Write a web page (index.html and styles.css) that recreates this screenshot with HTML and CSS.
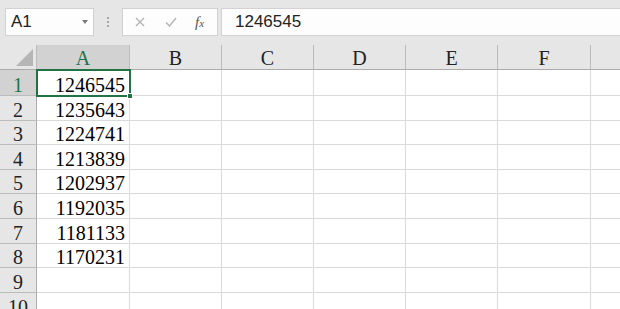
FILE: index.html
```html
<!DOCTYPE html>
<html lang="zh-CN">
  <head>
    <meta charset="UTF-8" />
    <meta name="viewport" content="width=device-width, initial-scale=1.0" />
    <title>Sheet1</title>
    <link rel="stylesheet" href="styles.css">
  </head>
  <body>
    <div class="formula-bar">
      <div class="name-box">
        <span>A1</span>
        <span class="caret"></span>
      </div>
      <div class="grip"><i></i><i></i><i></i></div>
      <div class="func-box">
        <svg width="10" height="10" viewBox="0 0 10 10"><path d="M1 1L9 9M9 1L1 9" stroke="#b4b4b4" stroke-width="1.4" fill="none"/></svg>
        <svg width="12" height="10" viewBox="0 0 12 10"><path d="M1 5.5L4.5 9L11 1" stroke="#b4b4b4" stroke-width="1.4" fill="none"/></svg>
        <span class="fx">f<small>x</small></span>
      </div>
      <div class="formula-input">1246545</div>
    </div>

    <div class="sheet">
      <div class="corner"><span class="tri"></span></div>
      <div class="col-head active">A</div>
      <div class="col-head">B</div>
      <div class="col-head">C</div>
      <div class="col-head">D</div>
      <div class="col-head">E</div>
      <div class="col-head">F</div>
      <div class="col-head"></div>

      <div class="row-head active">1</div>
      <div class="cell num selected">1246545<span class="handle"></span></div>
      <div class="cell"></div><div class="cell"></div><div class="cell"></div><div class="cell"></div><div class="cell"></div><div class="cell"></div>

      <div class="row-head">2</div>
      <div class="cell num">1235643</div>
      <div class="cell"></div><div class="cell"></div><div class="cell"></div><div class="cell"></div><div class="cell"></div><div class="cell"></div>

      <div class="row-head">3</div>
      <div class="cell num">1224741</div>
      <div class="cell"></div><div class="cell"></div><div class="cell"></div><div class="cell"></div><div class="cell"></div><div class="cell"></div>

      <div class="row-head">4</div>
      <div class="cell num">1213839</div>
      <div class="cell"></div><div class="cell"></div><div class="cell"></div><div class="cell"></div><div class="cell"></div><div class="cell"></div>

      <div class="row-head">5</div>
      <div class="cell num">1202937</div>
      <div class="cell"></div><div class="cell"></div><div class="cell"></div><div class="cell"></div><div class="cell"></div><div class="cell"></div>

      <div class="row-head">6</div>
      <div class="cell num">1192035</div>
      <div class="cell"></div><div class="cell"></div><div class="cell"></div><div class="cell"></div><div class="cell"></div><div class="cell"></div>

      <div class="row-head">7</div>
      <div class="cell num">1181133</div>
      <div class="cell"></div><div class="cell"></div><div class="cell"></div><div class="cell"></div><div class="cell"></div><div class="cell"></div>

      <div class="row-head">8</div>
      <div class="cell num">1170231</div>
      <div class="cell"></div><div class="cell"></div><div class="cell"></div><div class="cell"></div><div class="cell"></div><div class="cell"></div>

      <div class="row-head">9</div>
      <div class="cell"></div><div class="cell"></div><div class="cell"></div><div class="cell"></div><div class="cell"></div><div class="cell"></div><div class="cell"></div>

      <div class="row-head">10</div>
      <div class="cell"></div><div class="cell"></div><div class="cell"></div><div class="cell"></div><div class="cell"></div><div class="cell"></div><div class="cell"></div>
    </div>
  </body>
</html>
```

FILE: styles.css
```css
:root {
  --toolbar: #e6e6e6;
  --header: #e6e6e6;
  --header-active: #d2d2d2;
  --header-line: #bcbcbc;
  --grid-line: #dadada;
  --green: #217346;
  --box: #fdfdfd;
  --box-border: #d2d2d2;
}

* {
  margin: 0;
  padding: 0;
  box-sizing: border-box;
}

body {
  width: 620px;
  height: 309px;
  overflow: hidden;
  background-color: #fff;
  font-family: "Liberation Serif", "Times New Roman", serif;
}

/* barra de fórmulas */
.formula-bar {
  height: 45px;
  background-color: var(--toolbar);
  display: flex;
  align-items: flex-start;
  padding: 8px 0 0 5px;
  font-family: "Liberation Sans", Arial, sans-serif;
}

.name-box {
  width: 89px;
  height: 28px;
  background-color: var(--box);
  border: 1px solid var(--box-border);
  display: flex;
  align-items: center;
  justify-content: space-between;
  padding: 0 5px 0 5px;
  font-size: 17px;
  color: #222;
}

.caret {
  width: 0;
  height: 0;
  border-left: 3.5px solid transparent;
  border-right: 3.5px solid transparent;
  border-top: 4px solid #7a7a7a;
}

.grip {
  width: 28px;
  height: 28px;
  display: flex;
  flex-direction: column;
  align-items: center;
  justify-content: center;
  gap: 2px;
}

.grip i {
  display: block;
  width: 2px;
  height: 2px;
  background-color: #a8a8a8;
}

.func-box {
  width: 96px;
  height: 28px;
  background-color: var(--box);
  border: 1px solid var(--box-border);
  display: flex;
  align-items: center;
  padding: 0 0 0 12px;
  gap: 20px;
}

.fx {
  font-family: "Liberation Serif", serif;
  font-style: italic;
  font-size: 15px;
  color: #555;
  margin-left: -2px;
}

.fx small {
  font-size: 11px;
}

.formula-input {
  flex: 1;
  height: 28px;
  margin-left: 3px;
  background-color: var(--box);
  border: 1px solid var(--box-border);
  border-right: none;
  display: flex;
  align-items: center;
  padding-left: 13px;
  font-size: 17px;
  color: #222;
}

/* planilha */
.sheet {
  display: grid;
  grid-template-columns: 37px 93px 92px 92px 92px 92px 93px 60px;
  grid-template-rows: 25px 26px 25px 24px 25px 24px 25px 25px 24px 25px 25px;
  font-size: 20px;
  line-height: 20px;
  color: #111;
}

.corner {
  background-color: var(--header);
  border-right: 1px solid var(--header-line);
  border-bottom: 1px solid #ababab;
  display: flex;
  justify-content: flex-end;
  align-items: flex-end;
  padding: 0 3px 3px 0;
}

.tri {
  width: 0;
  height: 0;
  border-left: 17px solid transparent;
  border-bottom: 17px solid #b5b5b5;
}

.col-head {
  background-color: var(--header);
  border-right: 1px solid var(--header-line);
  border-bottom: 1px solid #ababab;
  display: flex;
  justify-content: center;
  align-items: flex-end;
  padding-bottom: 1px;
  color: #222;
}

.row-head {
  background-color: var(--header);
  border-right: 1px solid #ababab;
  border-bottom: 1px solid var(--header-line);
  display: flex;
  justify-content: center;
  align-items: flex-end;
  color: #222;
}

.col-head.active,
.row-head.active {
  background-color: var(--header-active);
  color: var(--green);
}

.cell {
  border-right: 1px solid var(--grid-line);
  border-bottom: 1px solid var(--grid-line);
}

.num {
  display: flex;
  justify-content: flex-end;
  align-items: flex-end;
  padding-right: 4px;
  color: #000;
}

.selected {
  position: relative;
  outline: 2px solid var(--green);
  outline-offset: -1px;
  border-color: transparent;
}

.handle {
  position: absolute;
  right: -4px;
  bottom: -4px;
  width: 6px;
  height: 6px;
  background-color: var(--green);
  border: 1px solid #fff;
}
```
